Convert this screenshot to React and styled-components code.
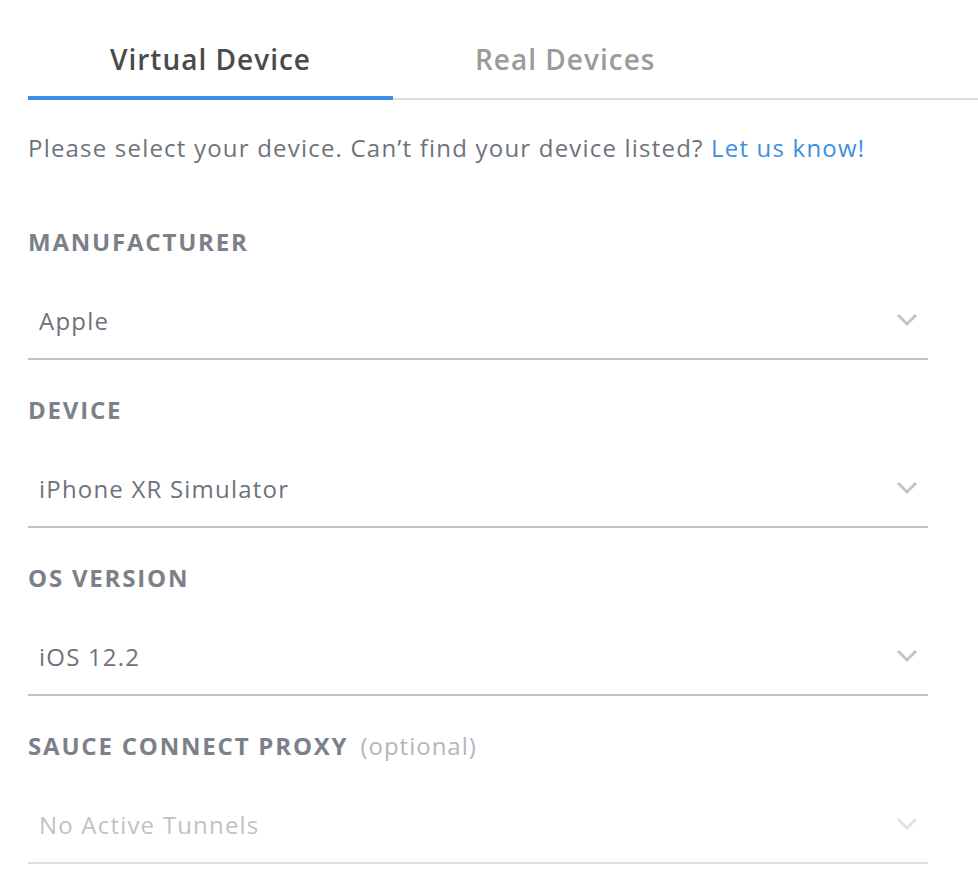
import styled, { createGlobalStyle } from "styled-components";

const GlobalStyle = createGlobalStyle`
    body {
        margin: 0;
        background: #ffffff;
        font-family: "Open Sans", "Lato", sans-serif;
    }
`;

const Page = styled.div`
    padding: 0 0 0 28px;
`;

const Tabs = styled.div`
    display: flex;
    border-bottom: 2px solid #dedede;
    margin-top: 19px;
`;

const Tab = styled.div`
    padding: 0 82px;
    height: 80px;
    display: flex;
    align-items: center;
    font-size: 28px;
    letter-spacing: 1px;
    font-weight: 600;
    color: ${props => (props.active ? "#4a4a4a" : "#9b9b9b")};
    box-shadow: ${props => (props.active ? "inset 0 -3px 0 #3e8ee3" : "none")};
    margin-bottom: -2px;
    border-bottom: 1px solid ${props => (props.active ? "#3e8ee3" : "transparent")};
`;

const Form = styled.div`
    width: 900px;
`;

const Intro = styled.p`
    margin: 0;
    padding-top: 33px;
    font-size: 24px;
    letter-spacing: 1.2px;
    line-height: 30px;
    color: #6e737b;
`;

const Link = styled.a`
    color: #3e8ee3;
    text-decoration: none;
`;

const Section = styled.div`
    padding-top: 35px;
    &:first-of-type {
        padding-top: 64px;
    }
`;

const Label = styled.div`
    font-size: 24px;
    letter-spacing: 1.8px;
    line-height: 30px;
    font-weight: 700;
    color: #7b8089;
`;

const Optional = styled.span`
    font-weight: 400;
    letter-spacing: 1px;
    color: #b4b6ba;
    margin-left: 12px;
`;

const Field = styled.div`
    display: flex;
    align-items: center;
    justify-content: space-between;
    height: 30px;
    margin-top: 48px;
    padding: 0 10px 23px 11px;
    border-bottom: 2px solid ${props => (props.disabled ? "#e0e0e0" : "#c2c2c2")};
    font-size: 24px;
    letter-spacing: 1.2px;
    color: ${props => (props.disabled ? "#c0c2c6" : "#6e737b")};
`;

const Chevron = ({ light }) => (
    <svg width="22" height="14" viewBox="0 0 22 14">
        <path
            d="M2 2 L11 11 L20 2"
            fill="none"
            stroke={light ? "#e2e2e2" : "#c4c4c4"}
            strokeWidth="3"
        />
    </svg>
);

const fields = [
    { label: "MANUFACTURER", value: "Apple" },
    { label: "DEVICE", value: "iPhone XR Simulator" },
    { label: "OS VERSION", value: "iOS 12.2" },
];

export default function App() {
    return (
        <Page>
            <GlobalStyle />
            <Tabs>
                <Tab active>Virtual Device</Tab>
                <Tab>Real Devices</Tab>
            </Tabs>
            <Form>
                <Intro>
                    Please select your device. Can’t find your device listed? <Link href="#">Let us know!</Link>
                </Intro>
                <div>
                    {fields.map(f => (
                        <Section key={f.label}>
                            <Label>{f.label}</Label>
                            <Field>
                                <span>{f.value}</span>
                                <Chevron />
                            </Field>
                        </Section>
                    ))}
                    <Section>
                        <Label>
                            SAUCE CONNECT PROXY<Optional>(optional)</Optional>
                        </Label>
                        <Field disabled>
                            <span>No Active Tunnels</span>
                            <Chevron light />
                        </Field>
                    </Section>
                </div>
            </Form>
        </Page>
    );
}
